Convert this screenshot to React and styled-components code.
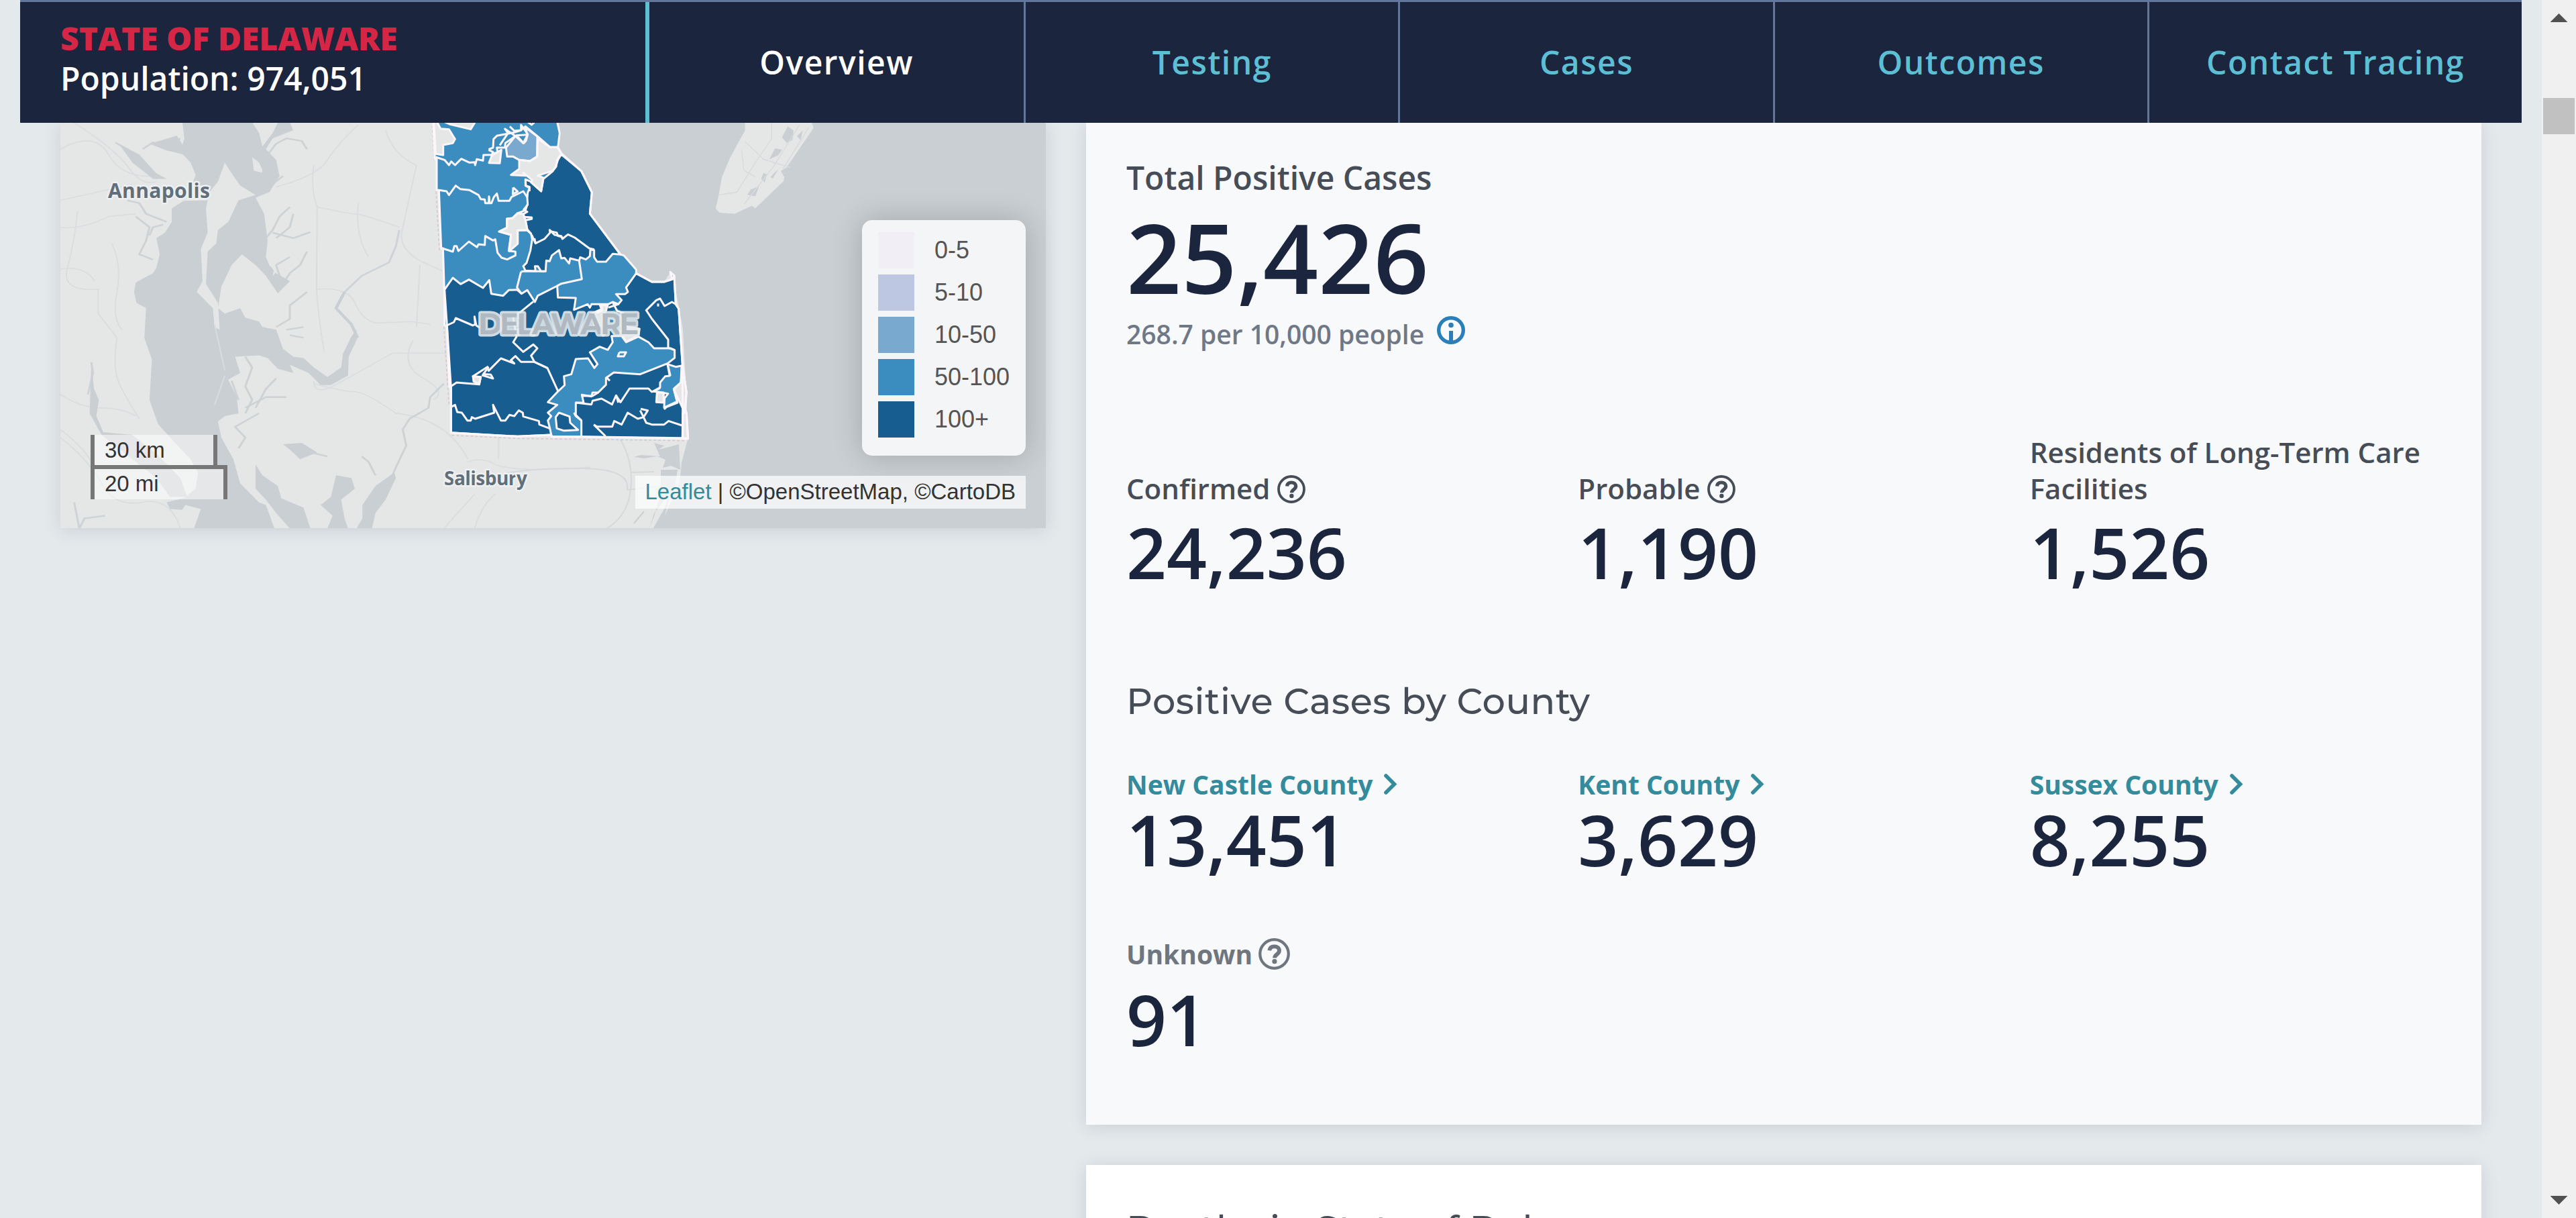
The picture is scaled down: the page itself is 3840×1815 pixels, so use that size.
import React from "react";
import styled, { createGlobalStyle } from "styled-components";

const navy = "#1b253d";
const teal = "#5cbfd4";
const link = "#338b9b";
const slate = "#464d57";
const sans = `"Open Sans", "Noto Sans", sans-serif`;
const arial = `"Liberation Sans", Arial, sans-serif`;
const display = `Montserrat, Inter, "Open Sans", sans-serif`;

const GlobalStyle = createGlobalStyle`
  * { box-sizing: border-box; }
  body { margin: 0; background: #e4e9ec; overflow: hidden; }
`;

const Page = styled.div`
  display: flex;
  width: 3840px;
  height: 1815px;
  overflow: hidden;
  background: #e4e9ec;
  font-family: ${sans};
`;

const Main = styled.div`
  display: flex;
  flex-direction: column;
  width: 3789px;
  padding: 0 30px;
`;

const Header = styled.header`
  display: grid;
  grid-template-columns: 938px repeat(5, 1fr);
  flex: none;
  height: 183px;
  border-top: 3px solid #65769c;
  background: ${navy};
  position: relative;
  z-index: 1;
`;

const Place = styled.div`
  padding: 24px 60px;
  border-right: 6px solid ${teal};
  font-size: 48px;
  line-height: 60px;
  color: #fff;
  font-weight: 600;
`;

const PlaceName = styled.div`
  font-weight: 800;
  color: #d62645;
  text-transform: uppercase;
`;

const Tab = styled.a`
  display: flex;
  align-items: center;
  justify-content: center;
  padding-bottom: 1px;
  font-size: 48px;
  font-weight: 600;
  letter-spacing: 1.5px;
  color: ${(p) => (p.$active ? "#fff" : teal)};
  & + & { border-left: 3px solid #65769c; }
`;

const Columns = styled.div`
  display: flex;
  gap: 60px;
  padding: 0 60px;
  align-items: flex-start;
`;

const MapPanel = styled.section`
  position: relative;
  width: 1469px;
  height: 604px;
  flex: none;
  box-shadow: 0 3px 24px rgba(40, 40, 80, 0.13);
  font-family: ${arial};
`;

const MapDrawing = styled.svg`
  display: block;
  width: 1469px;
  height: 604px;
`;

const Legend = styled.div`
  position: absolute;
  right: 30px;
  top: 145px;
  width: 244px;
  height: 351px;
  padding: 18px 24px;
  display: flex;
  flex-direction: column;
  gap: 9px;
  border-radius: 15px;
  background: #f4f5f7;
  box-shadow: 0 0 45px rgba(0, 0, 0, 0.2);
`;

const LegendRow = styled.div`
  display: flex;
  align-items: center;
  gap: 30px;
  height: 54px;
  font-size: 36px;
  line-height: 54px;
  color: #555;
  white-space: nowrap;
`;

const Swatch = styled.i`
  width: 54px;
  height: 54px;
  flex: none;
  background: ${(p) => p.$color};
`;

const Scale = styled.div`
  position: absolute;
  left: 45px;
  bottom: 43px;
`;

const ScaleLine = styled.div`
  width: ${(p) => p.$width}px;
  height: 51px;
  padding-left: 15px;
  border: 6px solid #777;
  ${(p) => (p.$top ? "border-top: 0;" : "border-bottom: 0; margin-top: -6px;")}
  background: rgba(255, 255, 255, 0.5);
  font-size: 33px;
  line-height: ${(p) => (p.$top ? 45 : 44)}px;
  color: #333;
`;

const Attribution = styled.div`
  position: absolute;
  right: 30px;
  bottom: 29px;
  height: 49px;
  padding: 0 15px;
  background: rgba(255, 255, 255, 0.7);
  font-size: 33px;
  line-height: 48px;
  color: #333;
  white-space: nowrap;
  a { color: ${link}; }
`;

const Stack = styled.div`
  display: flex;
  flex-direction: column;
  gap: 60px;
  width: 2080px;
`;

const Card = styled.section`
  height: ${(p) => p.$height}px;
  padding: ${(p) => p.$top}px 0 0 60px;
  background: ${(p) => p.$bg};
  box-shadow: 0 3px 24px rgba(40, 40, 80, 0.13);
`;

const Total = styled.div`
  color: ${slate};
  font-size: 48px;
  line-height: 60px;
  font-weight: 600;
`;

const TotalValue = styled.div`
  margin: 15px 0 14px;
  color: ${navy};
  font-size: 144px;
  line-height: 144px;
  font-weight: 600;
`;

const Rate = styled.div`
  display: flex;
  gap: 19px;
  height: 60px;
  font-size: 39px;
  line-height: 60px;
  font-weight: 600;
  color: #6f7886;
  svg { margin-top: 3px; }
`;

const Stats = styled.div`
  display: grid;
  grid-template-columns: repeat(3, 1fr);
  align-items: end;
  margin-top: ${(p) => p.$top}px;
`;

const Label = styled.div`
  display: flex;
  align-items: flex-start;
  gap: ${(p) => p.$gap || 11}px;
  padding-right: 60px;
  font-size: ${(p) => p.$size || 42}px;
  line-height: 54px;
  font-weight: ${(p) => (p.$bold ? 700 : 600)};
  color: ${(p) => p.$color || slate};
`;

const Value = styled.div`
  margin-top: ${(p) => p.$top}px;
  font-size: 105px;
  line-height: 105px;
  font-weight: 600;
  color: ${navy};
`;

const Heading = styled.h2`
  margin: ${(p) => p.$top || 0}px 0 0;
  font-family: ${display};
  font-size: 54px;
  line-height: 60px;
  font-weight: 500;
  letter-spacing: 0.6px;
  color: ${slate};
  white-space: nowrap;
`;

const Scrollbar = styled.aside`
  display: flex;
  flex-direction: column;
  align-items: center;
  width: 51px;
  height: 1815px;
  padding: 20px 0;
  background: #f0f0f0;
`;

const Arrow = styled.div`
  width: 26px;
  height: 13px;
  background: #505050;
  clip-path: ${(p) => (p.$up ? "polygon(50% 0, 100% 100%, 0 100%)" : "polygon(0 0, 100% 0, 50% 100%)")};
`;

const Thumb = styled.div`
  width: 47px;
  height: 54px;
  margin: 113px 0 auto;
  background: #c1c1c1;
`;

const Icon = styled.svg`
  flex: none;
  overflow: visible;
  margin-top: ${(p) => p.$top || 0}px;
`;

function HelpIcon({ size, top }) {
  return (
    <Icon width={size} height={size} viewBox="0 0 42 42" $top={top} fill="none" stroke="currentColor">
      <circle cx="21" cy="21" r="19" strokeWidth="3.800" />
      <path d="M14.500 16.500C15 12.500 17.500 11 21 11c4 0 6.700 2.300 6.700 5.600 0 5-6.200 4.900-6.200 9.700" strokeWidth="5.200" />
      <circle cx="21.400" cy="31" r="3.200" fill="currentColor" stroke="none" />
    </Icon>
  );
}

function InfoIcon() {
  return (
    <Icon width="42" height="42" viewBox="0 0 42 42">
      <circle cx="21" cy="21" r="18.300" fill="none" stroke="#2a7fb8" strokeWidth="5.400" />
      <circle cx="21" cy="13.500" r="3.800" fill="#2a7fb8" />
      <path d="M18 22h6v16h-6z" fill="#2a7fb8" />
    </Icon>
  );
}

function Chevron() {
  return (
    <Icon width="20" height="31" viewBox="0 0 20 31" $top={11}>
      <path d="M3 3l12.500 12.500L3 28" fill="none" stroke={link} strokeWidth="5.600" strokeLinecap="round" />
    </Icon>
  );
}

const water = "#cacfd3";
const land = "#e4e7e6";

const stateOutline =
  "75,-10 85,200 93,200 93,340 103,340 113,600 121,600 127,790 128,945 139,945 150,1220 157,1225 157,1424 455,1441 605,1434 607,1442 740,1442 1217,1452 1210,1335 1205,1322 1210,1245 1192,1120 1175,870 1162,850 1155,722 1137,705 1147,738 1110,750 1055,750 985,712 985,695 930,632 915,628 778,445 787,350 740,255 650,175 635,148 643,85 632,35 632,-10";

const darkAreas = [
  "650,180 635,205 625,235 612,255 570,290 560,345 510,300 490,292 490,320 508,330 500,352 498,375 500,405 482,427 498,437 480,447 485,460 518,462 518,469 490,475 498,515 515,535 520,560 512,610 495,665 480,680 490,700 535,702 532,680 545,680 560,703 580,703 583,655 598,658 608,632 640,608 650,645 665,643 685,668 690,645 730,655 735,640 760,650 778,635 780,605 797,608 797,640 810,660 850,660 880,625 915,628 778,445 787,350 740,255",
  "128,785 165,732 200,760 237,740 300,777 328,742 337,803 390,812 415,787 452,785 472,803 498,787 532,840 545,812 632,768 635,820 715,822 707,875 768,850 778,865 785,850 860,850 880,840 905,850 920,832 895,805 935,805 948,795 940,775 985,712 1055,750 1110,750 1147,738 1155,722 1162,850 1175,870 1192,1120 1193,1330 1192,1448 740,1442 607,1442 605,1434 455,1441 157,1424 157,1225 139,945",
];

const mediumAreas = [
  "778,1065 822,1040 858,1054 880,1020 875,992 920,992 940,1020 995,995 1040,1020 1065,1047 1140,1047 1157,1055 1157,1090 1125,1115 1003,1163 885,1155 850,1180 850,1210 815,1245 790,1245 785,1262 742,1255 750,1290 715,1290 715,1345 740,1370 740,1442 607,1442 598,1400 590,1370 605,1350 590,1335 632,1300 590,1288 635,1240 665,1212 662,1172 695,1163 715,1095 770,1092 798,1135 812,1118",
  "1125,1118 1162,1130 1188,1125 1185,1200 1153,1228 1168,1285 1110,1312 1112,1270 1128,1250 1085,1242 1060,1240 1092,1222 1092,1200 1115,1172 1135,1170",
];

const clearAreas = [
  "92,30 110,65 148,68 175,112 165,130 122,138 122,183 88,178 80,30",
  "95,20 150,45 245,68 265,35 265,10",
  "340,185 382,160 375,220 327,218",
  "545,110 600,148 633,148 650,178 632,205 627,235 612,253 545,275 570,285 560,345 515,305 520,295 480,262 492,275 425,272 462,245 462,205 510,210 542,190",
  "407,468 432,465 455,443 480,447 490,475 498,518 455,520 455,580 418,612 425,540 372,525 407,508",
  "255,1172 290,1175 283,1208 258,1195",
  "785,892 830,872 822,852 858,852 850,880 838,900 845,945 800,950",
  "920,945 1000,960 995,992 940,1018 920,985",
  "1078,1245 1108,1245 1108,1290 1075,1288",
  "1185,1200 1192,1120 1210,1245 1200,1330 1160,1245 1155,1228",
  "1195,1335 1210,1335 1217,1450 1192,1448",
];

const lewesArea = "845,895 900,870 930,885 922,945 920,992 860,960";
const chesholdArea = "403,150 445,98 480,130 498,95 490,60 510,75 543,100 542,190 510,210 462,205 435,190 408,190";
const delmarArea = "640,1335 687,1352 690,1380 725,1412 660,1415 630,1405 625,1355";

const borders = [
  "88,192 128,205 148,228 158,212 175,228 203,200 240,217 262,215 265,228 272,202 300,208 302,183 340,182",
  "325,158 345,150 347,112 362,97 410,88 440,82 470,72 490,55 545,100 600,148 633,148",
  "325,160 345,170 340,180 365,170 362,150 398,150 400,130 445,98 398,66 412,85 375,140",
  "420,55 440,75 470,72 470,48 500,90 492,120 482,130 450,95 498,92",
  "500,35 518,48 530,36",
  "103,340 137,345 148,362 178,320 198,335 240,340 280,362 290,380 308,382 310,398 338,398 348,372 362,355 370,388 418,388 428,370 480,345 498,372",
  "325,398 327,368 330,398",
  "435,328 455,346 433,358 435,328",
  "490,292 492,320 508,325 508,345",
  "118,600 165,615 172,590 182,590 190,612 237,570 273,595 280,582 308,585 310,545 345,565 355,560 365,620 383,642 408,650 445,632 445,615 415,612 425,540 372,525 407,508 407,468 432,465 455,443 490,430 498,405",
  "455,580 455,520 498,520 515,535",
  "530,555 535,578 575,558 600,530 598,518 620,540 650,545 655,558 680,538 710,552 775,600 797,605",
  "605,525 630,530 635,545 655,550",
  "518,540 535,578",
  "470,705 480,703 580,703",
  "730,655 742,738 650,758 632,768",
  "470,705 452,775 472,803",
  "525,838 455,895 435,910 450,995 435,1020 480,1063 525,1030 543,1047 515,1080 530,1108 588,1135 635,1238",
  "138,945 170,930 178,912 255,945 265,940 262,905 270,945 285,955",
  "150,1222 182,1200 283,1208 290,1175 255,1172 320,1130 325,1148 380,1092 440,1115 425,1100 445,1082 470,1108 530,1108 588,1135",
  "298,1162 335,1165 345,1182 298,1168 325,1130",
  "157,1310 175,1300 185,1332 205,1335 230,1370 245,1370 250,1355 265,1362 350,1335 345,1300 380,1370 400,1370 418,1345 440,1350 460,1325 478,1335 480,1352 550,1372 552,1388 598,1405",
  "850,1175 867,1192",
  "742,1260 790,1260 815,1245",
  "715,1290 785,1298 790,1282 830,1272 877,1298 895,1258 915,1288 955,1227 1040,1227 1055,1242 1092,1225",
  "895,1255 905,1290",
  "1125,1115 1138,1170",
  "795,1388 810,1397 878,1397 887,1372 920,1388 947,1335 992,1362 1018,1355 1030,1380 1055,1388 1110,1388 1130,1372 1190,1392",
  "797,1390 848,1440",
  "1005,1318 1037,1325 1018,1355 1003,1325",
  "740,1370 715,1350 707,1335",
  "910,1065 940,1065 930,1083 903,1083 910,1065",
  "1083,847 1083,860",
  "1162,850 1145,840 1112,858 1092,825 1075,832 1030,877 1055,915 1128,1008 1128,1045 1157,1055",
  "860,855 830,855 835,880 785,895",
  "860,865 905,850 880,842 900,880 930,890",
  "1110,1320 1120,1310 1170,1290 1153,1228",
  "1193,1335 1193,1448",
];

const roads = [
  "M20 130Q120 60 160 150T300 230M60 32Q180 130 220 200T300 250M20 320L230 260M20 420Q80 430 160 380L240 370M70 360Q60 480 40 570T130 650L130 740L185 830Q170 950 195 1010T250 1130M170 480Q200 560 185 660T200 800M20 575Q90 560 120 620",
  "M890 40Q830 110 800 170T650 270M760 190Q750 280 770 345L768 640Q770 720 790 880M770 345Q860 370 880 370T1010 420M970 60Q990 150 1060 190L1020 420Q1000 500 1080 550L1150 590M890 330Q880 450 920 530M1070 560L1060 790M1100 780L1050 770L940 775Q900 760 880 700T770 650",
  "M1150 887L990 887Q900 950 830 1000T760 990M1050 840Q1010 930 1080 980T1110 1060M760 1000Q850 1030 880 1030T1000 1110Q1150 1130 1210 1280M1300 1200L1300 1280M1210 1290Q1250 1270 1290 1300Q1350 1330 1568 1310M1230 1410L1140 1537M20 1170Q90 1240 110 1290M470 1130Q460 1060 500 980",
  "M20 1040Q80 1090 140 1090T240 1120M20 1200Q100 1280 140 1370T260 1440T370 1537M1290 1410Q1250 1450 1230 1537",
];

const creeks = [
  "M180 105L215 130 235 165 255 170 285 215 300 240M260 130L290 105 330 125 370 90M215 320L250 330 270 370 310 390 330 400M240 380L280 420 270 470 250 520 290 540M280 450L290 420 320 410",
  "M740 130L725 100 680 90 650 110 620 160 600 290M660 50L690 32M640 260L670 230M620 460L640 430 660 380 690 345M640 440L700 460 750 438M650 460L690 420 700 370",
  "M660 650L690 590 720 560 740 510M670 640L650 560 690 530M650 790L690 760 690 710 740 660M680 800L730 790M690 820L730 830",
  "M560 1110L580 1060 560 1010 580 940 560 900M590 1090L620 1020 650 980M560 1090L620 1050 680 1050M540 1060L520 990",
  "M1040 1130L1020 1170 1030 1230 1000 1310 970 1400 950 1450M1040 1130L1095 1090 1100 1050 1140 1000",
  "M60 1440L75 1537 90 1500 150 1490M100 1040L115 960 110 920M1010 430L1000 490 980 550 900 600 850 660 825 720",
  "M540 1240L560 1200 530 1160 600 1110M700 1240L800 1270M940 1340L920 1290 900 1270",
];

function DelawareMap() {
  return (
    <MapDrawing viewBox="90 183 1469 604">
      <rect x="90" y="183" width="1469" height="604" fill={land} />
      <g transform="translate(80 170) scale(.5102 .4017)">
        <g fill="none" stroke="#d9dddf" strokeWidth="4">
          {roads.map((d) => <path key={d} d={d} />)}
        </g>
        <g fill={water}>
          <path d="M375 20L382 90 370 140 400 180 415 225 405 260 455 270 450 320 380 322 345 350 345 400 325 440 300 460 310 520 300 570 290 590 240 625 235 660 242 700 270 720 265 830 287 910 280 1060 305 1150 355 1220 400 1280 422 1330 415 1390 380 1425 330 1440 340 1465 375 1468 385 1450 430 1465 410 1537 645 1537 620 1450 600 1440 545 1370 525 1280 490 1200 480 1140 500 1120 540 1110 535 1050 510 985 545 960 530 900 600 895 625 905 655 945 700 960 690 930 745 960 780 1005 810 1005 860 970 862 900 888 830 884 800 870 825 845 890 840 940 800 975 760 940 730 905 700 900 670 870 650 800 610 790 600 770 560 755 545 720 500 740 480 720 490 640 520 560 550 520 590 560 620 600 655 665 690 620 650 590 630 560 620 530 625 470 620 420 615 370 590 310 630 290 660 230 650 170 620 130 640 90 700 60 690 32 655 32 640 70 610 120 600 70 575 20Z" />
          <path d="M670 1225L725 1220 770 1255 720 1280 690 1245ZM825 1340L870 1350 880 1390 840 1430 850 1500 860 1537 800 1537 815 1490 780 1450 810 1420ZM995 1330L1000 1350 970 1430 940 1480 930 1537 885 1537 902 1500 902 1450 940 1380ZM590 1300L610 1340 655 1380 665 1425 730 1460 750 1537 690 1537 650 1480 620 1430 590 1390ZM110 930L118 1020 132 1060 125 1120 145 1180 230 1190 300 1260 370 1350 390 1420 340 1420 300 1350 230 1280 140 1190 105 1110ZM280 110L320 95 360 80 375 110 380 150 330 135ZM190 110L250 150 300 220 330 240 290 240 230 180Z" />
        </g>
        <path d="M500 180L480 250 455 290 445 350 450 440 430 500 435 620 418 660 465 720 470 790 485 800 480 700 445 630 450 510 475 480 480 430 510 400 540 320 590 300 545 265 520 220ZM580 160L600 180 615 220 585 210ZM520 600L530 560 555 590 545 620 600 640 570 680 600 700 560 720 540 680 510 690ZM640 600L670 560 690 500 650 530Z" fill={land} />
        <path d="M470 780L500 950M500 970L470 1080" fill="none" stroke="#d8dcde" strokeWidth="4" />
        <g fill="none" stroke={water} strokeWidth="6" strokeLinejoin="round" opacity=".85">
          {creeks.map((d) => <path key={d} d={d} />)}
        </g>
        <path d="M888 830L870 780 825 720 850 660" fill="none" stroke={water} strokeWidth="9" />
      </g>

      <path d="M830 170L834 198 832 219 837 228 867 255 882 287 879 318 925 377 948 405 972 420 990 420 1000 405 1005 420 1018 490 1023 585 1025 655 1016 690 1013 720 998 753 983 787 1559 787V170Z" fill={water} />
      <path d="M975 660L990 664 982 670 1012 662 1014 700 1000 694 988 697 992 685 980 680 960 683 945 681 955 678 984 680ZM985 700L1010 700 1006 725 990 745 975 765 968 787 975 770 985 735Z" fill={water} />
      <path d="M975 787L992 757 1003 720 985 787ZM945 780L960 762" fill={water} stroke={water} strokeWidth="2" />
      <path d="M925 655Q945 690 940 730T905 787M755 705Q800 697 870 698T935 730L985 725M940 704L975 703" fill="none" stroke="#d5d9db" strokeWidth="2" />

      <g transform="translate(1040 170) scale(.3444 .408)">
        <path d="M205 20L205 60 185 90 140 160 105 230 90 300 78 345 95 360 160 364 235 335 250 344 372 245 375 230 360 208 385 195 502 50 488 20Z" fill={land} />
        <path d="M390 45L415 60 410 95 385 105 365 85ZM335 125L365 130 350 150 310 165ZM285 215L300 220 290 250 275 235ZM315 230L350 200 325 235ZM230 275L265 265 250 300 215 295ZM430 80L455 60 445 95Z" fill={water} />
        <path d="M320 32V90L240 190 170 285 95 295M205 100L285 165 400 195M190 130L200 205 250 230M440 40L330 190 200 330M480 50L370 200" fill="none" stroke="#d7dbdd" strokeWidth="4" />
      </g>

      <g transform="translate(620 170) scale(.33333)">
        <path d="M72 30L82 205M90 345L105 610M125 950L148 1300M160 1436L455 1450 1200 1460" fill="none" stroke="#d8c8cd" strokeWidth="5" strokeDasharray="12 9" />
        <polygon points={stateOutline} fill="#3b8dc0" />
        {darkAreas.map((p) => <polygon key={p} points={p} fill="#185d8f" />)}
        {mediumAreas.map((p) => <polygon key={p} points={p} fill="#3b8dc0" />)}
        <polygon points={lewesArea} fill="#3b8dc0" />
        <polygon points={chesholdArea} fill="#7aa9d0" />
        <polygon points={delmarArea} fill="#185d8f" />
        {clearAreas.map((p) => <polygon key={p} points={p} fill={land} />)}
        <g fill="none" stroke="#fcf6fb" strokeWidth="9" strokeLinejoin="round">
          <polygon points={stateOutline} />
          {darkAreas.map((p) => <polygon key={p} points={p} />)}
          {mediumAreas.map((p) => <polygon key={p} points={p} />)}
          {clearAreas.map((p) => <polygon key={p} points={p} />)}
          <polygon points={chesholdArea} />
          <polygon points={delmarArea} />
          {borders.map((p) => <polyline key={p} points={p} />)}
        </g>
      </g>

      <g fontFamily={sans} fontWeight="700" fill="#616f7b" stroke="#eef0f1" strokeWidth="5" paintOrder="stroke" strokeLinejoin="round">
        <text x="161" y="295" fontSize="30" textLength="152">Annapolis</text>
        <text x="662" y="723" fontSize="28" textLength="124">Salisbury</text>
      </g>
      <text x="713" y="498" fontFamily={display} fontSize="43" fontWeight="700" textLength="239" fill="#b0b9c1" stroke="#e9edef" strokeOpacity=".88" strokeWidth="7" paintOrder="stroke" strokeLinejoin="round">DELAWARE</text>
    </MapDrawing>
  );
}

const tabs = ["Overview", "Testing", "Cases", "Outcomes", "Contact Tracing"];

const ranges = [
  ["0-5", "#f1eef6"],
  ["5-10", "#bdc7e1"],
  ["10-50", "#7aa9d0"],
  ["50-100", "#3b8dc0"],
  ["100+", "#185d8f"],
];

const kinds = [
  { name: "Confirmed", value: "24,236", help: true },
  { name: "Probable", value: "1,190", help: true },
  { name: "Residents of Long-Term Care Facilities", value: "1,526" },
];

const counties = [
  ["New Castle County", "13,451"],
  ["Kent County", "3,629"],
  ["Sussex County", "8,255"],
];

export default function App() {
  return (
    <Page>
      <GlobalStyle />
      <Main>
        <Header>
          <Place>
            <PlaceName>State of Delaware</PlaceName>
            Population: 974,051
          </Place>
          {tabs.map((tab, i) => <Tab key={tab} $active={i === 0}>{tab}</Tab>)}
        </Header>
        <Columns>
          <MapPanel>
            <DelawareMap />
            <Scale>
              <ScaleLine $top $width={189}>30 km</ScaleLine>
              <ScaleLine $width={204}>20 mi</ScaleLine>
            </Scale>
            <Legend>
              {ranges.map(([range, color]) => (
                <LegendRow key={range}><Swatch $color={color} />{range}</LegendRow>
              ))}
            </Legend>
            <Attribution><a>Leaflet</a> | ©OpenStreetMap, ©CartoDB</Attribution>
          </MapPanel>
          <Stack>
            <Card $height={1493} $top={52} $bg="#f8f9fb">
              <Total>Total Positive Cases</Total>
              <TotalValue>25,426</TotalValue>
              <Rate>268.7 per 10,000 people <InfoIcon /></Rate>
              <Stats $top={119}>
                {kinds.map((k) => (
                  <div key={k.name}>
                    <Label>{k.name}{k.help && <HelpIcon size={42} top={7} />}</Label>
                    <Value $top={15}>{k.value}</Value>
                  </div>
                ))}
              </Stats>
              <Heading $top={140}>Positive Cases by County</Heading>
              <Stats $top={67}>
                {counties.map(([name, value]) => (
                  <div key={name}>
                    <Label $size={39} $gap={17} $bold $color={link}>{name}<Chevron /></Label>
                    <Value $top={2}>{value}</Value>
                  </div>
                ))}
              </Stats>
              <Stats $top={92}>
                <div>
                  <Label $size={39} $gap={9} $bold $color="#6f767e">Unknown<HelpIcon size={47} top={3} /></Label>
                  <Value $top={17}>91</Value>
                </div>
              </Stats>
            </Card>
            <Card $height={400} $top={65} $bg="#fff">
              <Heading>Deaths in State of Delaware</Heading>
            </Card>
          </Stack>
        </Columns>
      </Main>
      <Scrollbar>
        <Arrow $up />
        <Thumb />
        <Arrow />
      </Scrollbar>
    </Page>
  );
}
